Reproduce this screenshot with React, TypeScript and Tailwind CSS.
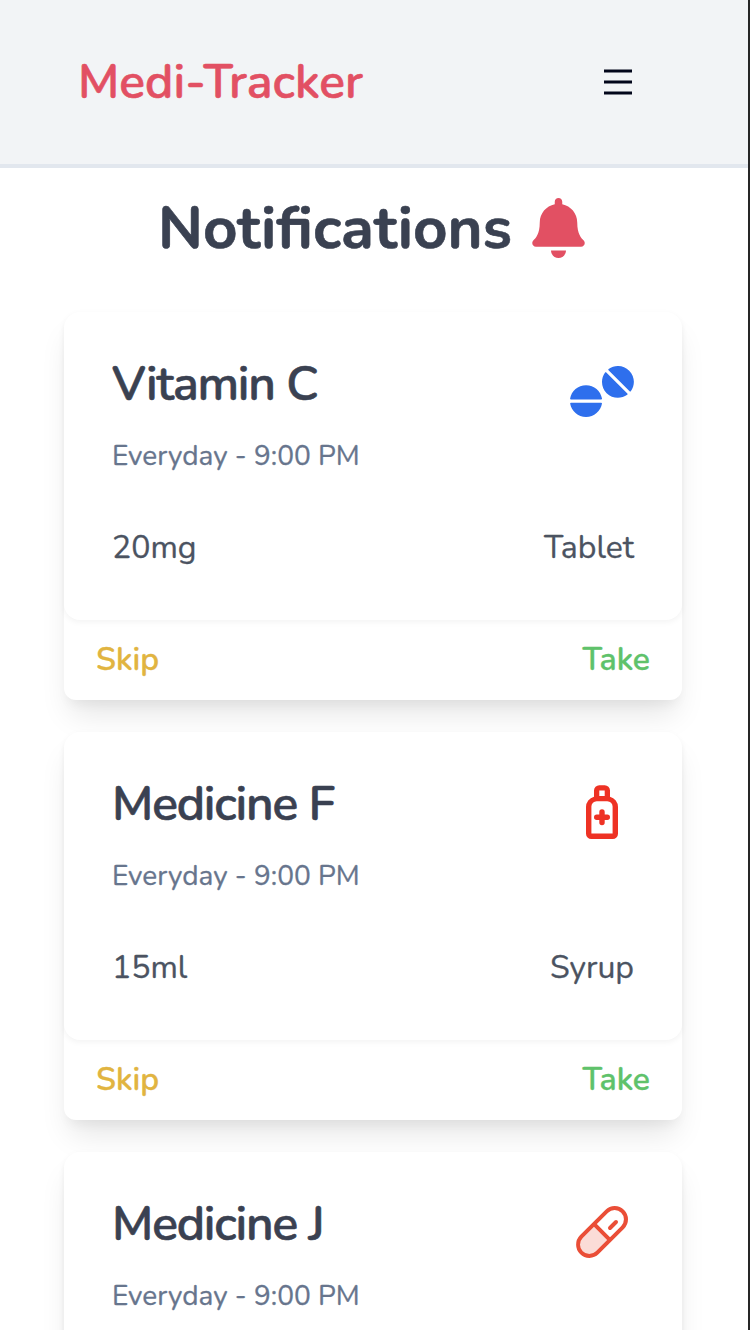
import type { ReactNode } from "react";
import { FaBell, FaTablets } from "react-icons/fa";
import { PiPillDuotone } from "react-icons/pi";

function BottleIcon() {
  return (
    <svg width="64" height="64" viewBox="0 0 64 64" fill="currentColor" fillRule="evenodd" className="text-[#ee3224]">
      <path d="M29.300 5.200h5.400a5.300 5.300 0 0 1 5.300 5.300v6.200a10.700 10.700 0 0 1 8 10.300v26.700a5.300 5.300 0 0 1-5.300 5.300H21.300a5.300 5.300 0 0 1-5.300-5.300V27a10.700 10.700 0 0 1 8-10.300v-6.200a5.300 5.300 0 0 1 5.300-5.300ZM29.300 10.600V16h5.400v-5.400ZM26.700 21.300a5.300 5.300 0 0 0-5.300 5.300v26.800h21.200V26.600a5.300 5.300 0 0 0-5.300-5.300Z" />
      <path d="M32 32v10.600M26.700 37.300h10.600" stroke="currentColor" strokeLinecap="round" strokeWidth="5.400" />
    </svg>
  );
}

type Medicine = { name: string; dose?: string; form?: string; icon: ReactNode };

const medicines: Medicine[] = [
  { name: "Vitamin C", dose: "20mg", form: "Tablet", icon: <FaTablets className="mb-px h-[51px] w-16 text-[#2e6fed]" /> },
  { name: "Medicine F", dose: "15ml", form: "Syrup", icon: <BottleIcon /> },
  { name: "Medicine J", icon: <PiPillDuotone className="size-16 text-[#ea4e37]" /> },
];

function Card({ name, dose, form, icon }: Medicine) {
  return (
    <article className="rounded-xl bg-white shadow-[0_20px_30px_-6px_rgba(0,0,0,0.1),0_8px_12px_-4px_rgba(0,0,0,0.05)]">
      <div className="h-[308px] rounded-2xl bg-white px-12 pt-12 shadow-[0_2px_6px_rgba(0,0,0,0.05)]">
        <div className="flex items-start justify-between">
          <div>
            <h2 className="text-[48px] leading-[48px] font-semibold tracking-tight whitespace-nowrap text-[#3a4151] [-webkit-text-stroke:0.6px]">{name}</h2>
            <p className="mt-7 text-[28px] leading-10 whitespace-nowrap text-[#67758d] [-webkit-text-stroke:0.3px]">Everyday - 9:00 PM</p>
          </div>
          <div className="flex h-16 items-center justify-center">{icon}</div>
        </div>
        {dose && (
          <div className="mt-12 flex justify-between text-[32px] leading-12 text-[#4b5361] [-webkit-text-stroke:0.3px]">
            <span>{dose}</span>
            <span>{form}</span>
          </div>
        )}
      </div>
      {dose && (
        <div className="flex h-20 items-center justify-between px-8 text-[32px] font-semibold [-webkit-text-stroke:0.3px]">
          <button className="text-[#e1b440]">Skip</button>
          <button className="text-[#5fc26b]">Take</button>
        </div>
      )}
    </article>
  );
}

export default function App() {
  return (
    <div className="h-[1330px] overflow-hidden border-r-2 border-[#262626] bg-white font-['Nunito','Lato',sans-serif]">
      <header className="flex h-[168px] items-center justify-between border-b-4 border-[#e2e7ee] bg-[#f2f4f6] pr-[116px] pl-[78px]">
        <span className="text-[48px] leading-none font-semibold text-[#e25063] [-webkit-text-stroke:0.6px]">Medi-Tracker</span>
        <button aria-label="Menu">
          <svg width="28" height="28" viewBox="0 0 28 28" stroke="#02061a" strokeWidth="3">
            <path d="M0 3h28M0 14h28M0 25h28" />
          </svg>
        </button>
      </header>
      <main className="pr-[66px] pl-16">
        <div className="flex h-[144px] items-start justify-center gap-5 pt-[30px] pr-[3px]">
          <h1 className="text-[60px] leading-[60px] font-bold text-[#3a4151] [-webkit-text-stroke:0.6px]">Notifications</h1>
          <FaBell className="h-[60px] w-[53px] text-[#e25063]" />
        </div>
        <div className="flex flex-col gap-8">
          {medicines.map((m) => (
            <Card key={m.name} {...m} />
          ))}
        </div>
      </main>
    </div>
  );
}
